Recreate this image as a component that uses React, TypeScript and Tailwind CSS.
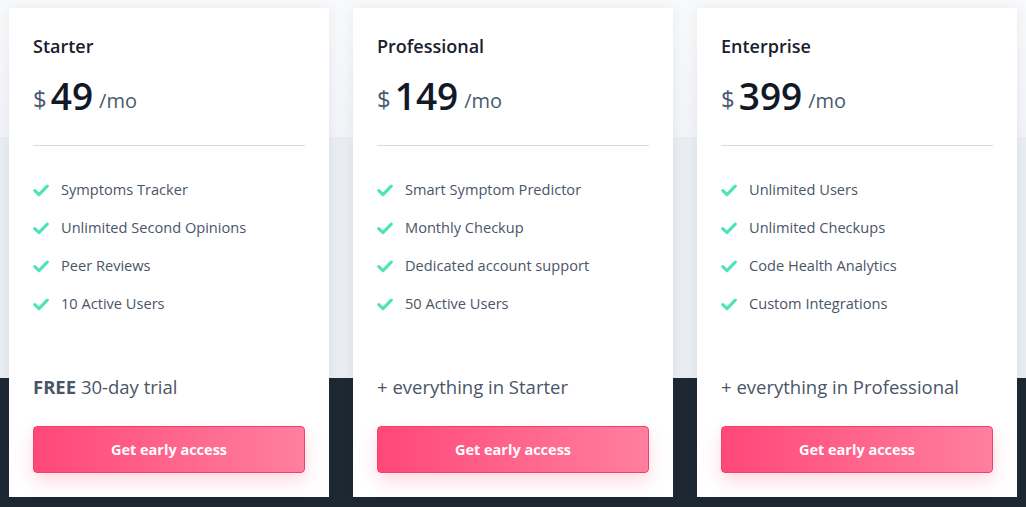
const plans = [
  {
    name: "Starter",
    price: "49",
    features: ["Symptoms Tracker", "Unlimited Second Opinions", "Peer Reviews", "10 Active Users"],
    extra: "starter",
  },
  {
    name: "Professional",
    price: "149",
    features: ["Smart Symptom Predictor", "Monthly Checkup", "Dedicated account support", "50 Active Users"],
    extra: "+ everything in Starter",
  },
  {
    name: "Enterprise",
    price: "399",
    features: ["Unlimited Users", "Unlimited Checkups", "Code Health Analytics", "Custom Integrations"],
    extra: "+ everything in Professional",
  },
];

function Check() {
  return (
    <svg width="16" height="13" viewBox="0 0 16 13" className="shrink-0">
      <path
        d="M1.8 6.6l4.2 4 8.2-8.4"
        fill="none"
        stroke="#4fe3b9"
        strokeWidth="3.2"
        strokeLinecap="round"
        strokeLinejoin="round"
      />
    </svg>
  );
}

export default function App() {
  return (
    <div
      className="h-[507px] w-[1026px] overflow-hidden bg-[linear-gradient(to_bottom,#f8f9fb_0px,#f1f3f6_137px,#e9ecf0_137px,#e9ecf0_378px,#1e2833_378px)] pl-[9px] pt-[8px]"
      style={{ fontFamily: '"Open Sans", "Noto Sans", sans-serif' }}
    >
      <div className="flex gap-6">
        {plans.map((p) => (
          <div
            key={p.name}
            className="flex h-[489px] w-[320px] flex-col bg-white px-6 pt-6 pb-6 shadow-[0_0_12px_rgba(30,40,60,0.06)]"
          >
            <h3 className="text-[18px] leading-7 font-semibold text-[#1a202c]">{p.name}</h3>
            <div className="mt-4 flex h-10 items-end">
              <span className="mb-[5px] text-[24px] leading-none text-[#4a5a6e]">$</span>
              <span className="ml-1 text-[37px] leading-10 font-semibold text-[#111827]">{p.price}</span>
              <span className="mb-[5px] ml-[6px] text-[20px] leading-none text-[#4a5a6e]">/mo</span>
            </div>
            <div className="mt-[29px] border-t border-[#d5d9df]" />
            <ul className="mt-[32px] flex flex-col gap-[14px]">
              {p.features.map((f) => (
                <li key={f} className="flex h-6 items-center gap-3 text-[14.6px] text-[#4a5568]">
                  <Check />
                  <span>{f}</span>
                </li>
              ))}
            </ul>
            <div className="mt-auto text-[18.5px] leading-7 text-[#4a5568]">
              {p.extra === "starter" ? (
                <>
                  <span className="font-bold">FREE</span> 30-day trial
                </>
              ) : (
                p.extra
              )}
            </div>
            <button className="mt-[25px] h-[47px] w-full rounded border border-[#f0406e] bg-[linear-gradient(to_right,#ff4878,#ff7f9e)] text-[14.5px] font-bold text-white shadow-[0_8px_18px_rgba(255,80,120,0.22)]">
              Get early access
            </button>
          </div>
        ))}
      </div>
    </div>
  );
}
